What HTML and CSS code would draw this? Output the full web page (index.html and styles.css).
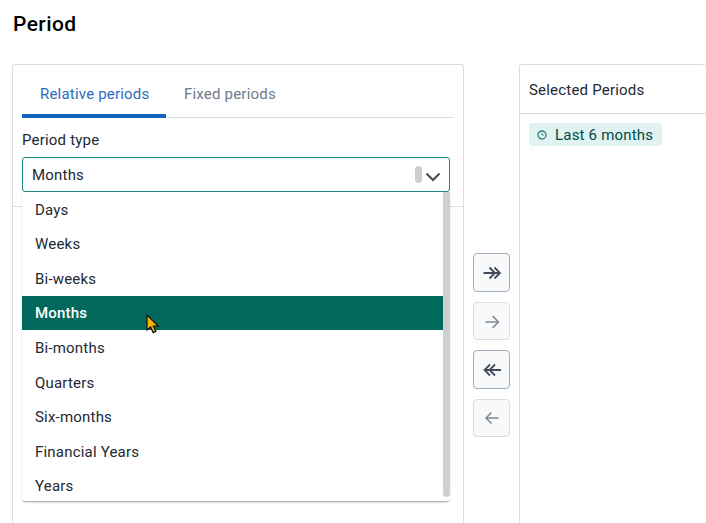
FILE: index.html
```html
<!DOCTYPE html>
<html lang="en">
<head>
  <meta charset="UTF-8">
  <title>Period</title>
  <link rel="stylesheet" href="styles.css">
</head>
<body>
  <h1 class="title">Period</h1>

  <div class="transfer">
    <section class="card card-left">
      <div class="tabs">
        <div class="tab tab-active">Relative periods</div>
        <div class="tab">Fixed periods</div>
      </div>
      <div class="filter">
        <label class="field-label">Period type</label>
        <div class="select">
          <span>Months</span>
          <span class="select-handle"></span>
          <svg class="select-arrow" width="16" height="16" viewBox="0 0 16 16"><path d="M1.500 4.500 8 11l6.500-6.500" fill="none" stroke="#404b5a" stroke-width="2"/></svg>
          <ul class="menu">
            <li>Days</li>
            <li>Weeks</li>
            <li>Bi-weeks</li>
            <li class="menu-active">Months
              <svg class="cursor" width="16" height="20" viewBox="0 0 16 20"><path d="M1 1v15l3.600-3 2.600 5.600 2.700-1.200-2.500-5.200h4.800z" fill="#f5b400" stroke="#111" stroke-width="1.200"/></svg>
            </li>
            <li>Bi-months</li>
            <li>Quarters</li>
            <li>Six-months</li>
            <li>Financial Years</li>
            <li>Years</li>
          </ul>
        </div>
      </div>
      <div class="divider"></div>
    </section>

    <div class="actions">
      <button class="action">
        <svg width="20" height="20" viewBox="0 0 20 20"><path d="M1.500 10H17M7.500 4.500 13 10l-5.500 5.500M12.500 4.500 18 10l-5.500 5.500" fill="none" stroke="#404b5a" stroke-width="1.800"/></svg>
      </button>
      <button class="action action-off">
        <svg width="20" height="20" viewBox="0 0 20 20"><path d="M3.500 11H16.500M10.500 5 16.500 11l-6 6" fill="none" stroke="#404b5a" stroke-width="1.500"/></svg>
      </button>
      <button class="action">
        <svg width="20" height="20" viewBox="0 0 20 20"><path d="M19 10H3M8 4.500 2.500 10 8 15.500M13 4.500 7.500 10l5.500 5.500" fill="none" stroke="#404b5a" stroke-width="1.800"/></svg>
      </button>
      <button class="action action-off">
        <svg width="20" height="20" viewBox="0 0 20 20"><path d="M16.500 10H4M9.500 4.500 4 10l5.500 5.500" fill="none" stroke="#404b5a" stroke-width="1.500"/></svg>
      </button>
    </div>

    <section class="card card-right">
      <div class="card-header">Selected Periods</div>
      <div class="card-body">
        <span class="chip">
          <svg width="10" height="10" viewBox="0 0 10 10"><circle cx="5" cy="5" r="4" fill="none" stroke="#2f7f78" stroke-width="1.300"/><path d="M5 3v2h1.500" fill="none" stroke="#2f7f78"/></svg>
          Last 6 months
        </span>
      </div>
    </section>
  </div>
</body>
</html>
```

FILE: styles.css
```css
body {
  margin: 0;
  height: 523px;
  overflow: hidden;
  background: #fff;
  color: #212934;
  font-family: Roboto, "Liberation Sans", sans-serif;
  font-size: 15px;
  letter-spacing: 0.2px;
}
.title {
  margin: 0;
  padding: 12px 13px 0;
  height: 64px;
  box-sizing: border-box;
  color: #000;
  font-size: 21px;
  font-weight: 500;
  letter-spacing: 0.4px;
  line-height: 24px;
}
.transfer {
  display: flex;
  align-items: stretch;
  height: 459px;
  padding-left: 12px;
}
.card {
  box-sizing: border-box;
  background: #fff;
  border: 1px solid #d5dde5;
  border-bottom: none;
  border-radius: 3px 3px 0 0;
}
.card-left {
  flex: 0 0 452px;
  padding: 0 9px;
}
.card-right {
  flex: 1;
  border-right: none;
}
.tabs {
  display: flex;
  height: 53px;
  box-sizing: border-box;
  border-bottom: 1px solid #d5dde5;
}
.tab {
  height: 53px;
  box-sizing: border-box;
  padding: 20px 18px 0;
  color: #6e7a8a;
  line-height: 18px;
  white-space: nowrap;
}
.tab-active {
  width: 144px;
  flex: none;
  color: #2b6bbd;
  border-bottom: 4px solid #1565c0;
}
.filter {
  padding-top: 13px;
  position: relative;
  z-index: 1;
}
.field-label {
  display: block;
  line-height: 18px;
  margin-bottom: 8px;
}
.select {
  position: relative;
  display: flex;
  align-items: center;
  width: 428px;
  height: 35px;
  box-sizing: border-box;
  padding: 0 9px;
  background: #fff;
  border: 1px solid #1a8a7c;
  border-radius: 3px;
}
.select-handle {
  position: absolute;
  left: 392px;
  top: 8px;
  width: 7px;
  height: 17px;
  background: #cfcfcf;
  border-radius: 4px;
}
.select-arrow {
  position: absolute;
  right: 8px;
  top: 11px;
}
.menu {
  position: absolute;
  left: -1px;
  top: 34px;
  width: 428px;
  height: 309px;
  box-sizing: border-box;
  margin: 0;
  padding: 0 7px 0 0;
  list-style: none;
  background: #fff;
  border-radius: 0 0 3px 3px;
  box-shadow: 0 2px 2px -1px rgba(33, 41, 52, 0.45), 0 0 1px rgba(33, 41, 52, 0.2);
  overflow: hidden;
}
.menu::after {
  content: "";
  position: absolute;
  right: 0;
  top: 0;
  width: 7px;
  height: 305px;
  background: #cfcfcf;
  border-radius: 0 0 4px 4px;
}
.menu li {
  position: relative;
  height: 34.6px;
  box-sizing: border-box;
  padding: 0.7px 0 0 13px;
  line-height: 34.6px;
}
.menu .menu-active {
  background: #00695c;
  color: #fff;
  font-weight: 500;
}
.cursor {
  position: absolute;
  left: 124px;
  top: 18px;
}
.divider {
  height: 1px;
  margin: 14px -9px 0;
  background: #d5dde5;
}
.actions {
  flex: 0 0 55px;
  display: flex;
  flex-direction: column;
  align-items: center;
  gap: 10px;
  padding-top: 189px;
}
.action {
  display: flex;
  align-items: center;
  justify-content: center;
  width: 37px;
  height: 39px;
  padding: 0;
  background: #f8f9fa;
  border: 1px solid #a0adba;
  border-radius: 4px;
}
.action-off {
  border-color: #d5dde5;
  height: 38px;
}
.action-off svg {
  opacity: 0.65;
}
.card-header {
  height: 49px;
  box-sizing: border-box;
  padding: 1px 9px 0;
  border-bottom: 1px solid #d5dde5;
  line-height: 48px;
}
.card-body {
  padding: 9px;
}
.chip {
  display: inline-flex;
  align-items: center;
  gap: 8px;
  height: 23px;
  padding: 0 9px 0 8px;
  background: #e0f2f1;
  border-radius: 3px;
  color: #004c45;
}
```
